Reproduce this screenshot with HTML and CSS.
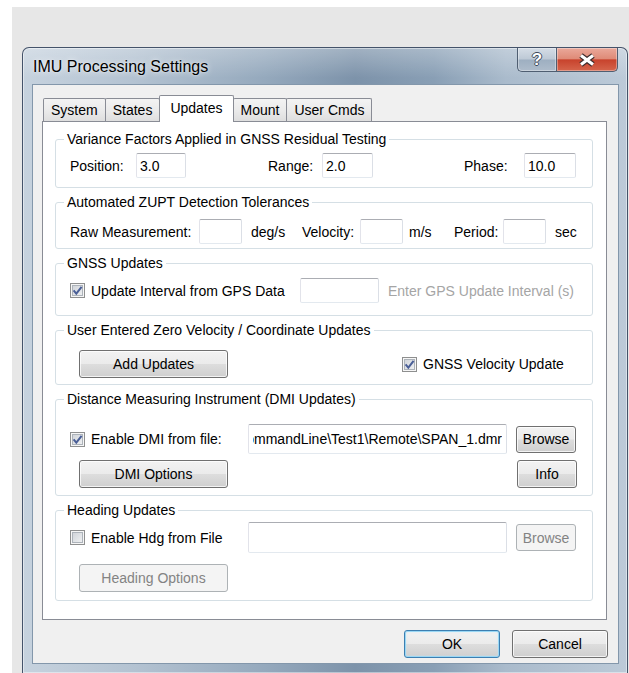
FILE: index.html
```html
<!DOCTYPE html>
<html lang="en">
<head>
<meta charset="utf-8">
<title>IMU Processing Settings</title>
<link rel="stylesheet" href="styles.css">
</head>
<body>
<div class="desk">
  <div class="window">
    <div class="titlebar">
      <span class="title">IMU Processing Settings</span>
      <div class="caption">
        <span class="cap cap-help"><span class="cap-q">?</span></span>
        <span class="cap cap-close">
          <svg class="cap-x" width="20" height="14" viewBox="0 0 20 14">
            <path d="M4 2.5 L16 11.5 M16 2.5 L4 11.5" stroke="#3b2b2b" stroke-width="5.4" fill="none"/>
            <path d="M4 2.5 L16 11.5 M16 2.5 L4 11.5" stroke="#fff" stroke-width="3.2" fill="none"/>
          </svg>
        </span>
      </div>
    </div>

    <div class="client">
      <div class="tabs">
        <span class="tab">System</span>
        <span class="tab">States</span>
        <span class="tab active">Updates</span>
        <span class="tab">Mount</span>
        <span class="tab">User Cmds</span>
      </div>

      <div class="panel">
        <fieldset class="grp grp-variance">
          <legend>Variance Factors Applied in GNSS Residual Testing</legend>
          <div class="row">
            <span class="lbl lbl-position">Position:</span>
            <input class="txt num-position" type="text" value="3.0">
            <span class="lbl lbl-range">Range:</span>
            <input class="txt num-range" type="text" value="2.0">
            <span class="lbl lbl-phase">Phase:</span>
            <input class="txt num-phase" type="text" value="10.0">
          </div>
        </fieldset>

        <fieldset class="grp grp-zupt">
          <legend>Automated ZUPT Detection Tolerances</legend>
          <div class="row">
            <span class="lbl lbl-raw">Raw Measurement:</span>
            <input class="txt tol" type="text">
            <span class="lbl unit-deg">deg/s</span>
            <span class="lbl lbl-velocity">Velocity:</span>
            <input class="txt tol" type="text">
            <span class="lbl unit-ms">m/s</span>
            <span class="lbl lbl-period">Period:</span>
            <input class="txt tol" type="text">
            <span class="lbl unit-sec">sec</span>
          </div>
        </fieldset>

        <fieldset class="grp grp-gnss">
          <legend>GNSS Updates</legend>
          <div class="row">
            <label class="chk chk-gps">
              <span class="box"><svg width="11" height="11" viewBox="0 0 11 11"><path d="M1.6 5.4 L4.3 8.6 L9.6 1.8" stroke="#4a5f97" stroke-width="2" fill="none"/></svg></span>
              Update Interval from GPS Data
            </label>
            <input class="txt interval" type="text">
            <span class="hint">Enter GPS Update Interval (s)</span>
          </div>
        </fieldset>

        <fieldset class="grp grp-user">
          <legend>User Entered Zero Velocity / Coordinate Updates</legend>
          <div class="row">
            <button class="btn btn-wide">Add Updates</button>
            <label class="chk chk-velocity">
              <span class="box"><svg width="11" height="11" viewBox="0 0 11 11"><path d="M1.6 5.4 L4.3 8.6 L9.6 1.8" stroke="#4a5f97" stroke-width="2" fill="none"/></svg></span>
              GNSS Velocity Update
            </label>
          </div>
        </fieldset>

        <fieldset class="grp grp-dmi">
          <legend>Distance Measuring Instrument (DMI Updates)</legend>
          <div class="row">
            <label class="chk chk-file">
              <span class="box"><svg width="11" height="11" viewBox="0 0 11 11"><path d="M1.6 5.4 L4.3 8.6 L9.6 1.8" stroke="#4a5f97" stroke-width="2" fill="none"/></svg></span>
              Enable DMI from file:
            </label>
            <!-- right-to-left box keeps the end of a long path in view -->
            <input class="txt path" type="text" dir="rtl" readonly value="C:\NovAtel\Inertial Explorer\CommandLine\Test1\Remote\SPAN_1.dmr">
            <button class="btn btn-small btn-browse">Browse</button>
          </div>
          <div class="row row-dmi-opts">
            <button class="btn btn-wide">DMI Options</button>
            <button class="btn btn-small btn-info">Info</button>
          </div>
        </fieldset>

        <fieldset class="grp grp-heading">
          <legend>Heading Updates</legend>
          <div class="row">
            <label class="chk chk-file">
              <span class="box"></span>
              Enable Hdg from File
            </label>
            <input class="txt path path-tall" type="text">
            <button class="btn btn-small btn-browse" disabled>Browse</button>
          </div>
          <div class="row row-hdg-opts">
            <button class="btn btn-wide" disabled>Heading Options</button>
          </div>
        </fieldset>
      </div>

      <div class="actions">
        <button class="btn btn-action btn-default">OK</button>
        <button class="btn btn-action">Cancel</button>
      </div>
    </div>
  </div>
</div>
</body>
</html>
```

FILE: styles.css
```css
* { box-sizing: border-box; }

html, body { margin: 0; padding: 0; }

body {
  width: 629px;
  height: 673px;
  overflow: hidden;
  background: #fff;
  font-family: "Liberation Sans", Arial, sans-serif;
  font-size: 14px;
  color: #000;
}

/* grey backdrop behind the dialog */
.desk {
  margin: 7px 0 0 12px;
  height: 666px;
  padding: 40px 0 0 10px;
  background: #e7e7e7;
}

/* Aero style window frame */
.window {
  width: 606px;
  height: 626px;
  display: flex;
  flex-direction: column;
  border: 1px solid #44536a;
  border-bottom: none;
  border-radius: 7px 7px 0 0;
  background:
    linear-gradient(180deg, rgba(255,255,255,.28) 0, rgba(255,255,255,0) 30px),
    linear-gradient(90deg, #c6d2de 0%, #b4c3d2 18%, #95a9bd 40%, #7d93aa 55%, #899fb5 68%, #aabbcc 80%, #bccad8 100%);
  box-shadow: inset 0 0 0 1px rgba(255,255,255,.45);
}

.titlebar {
  flex: none;
  height: 36px;
  display: flex;
  align-items: flex-start;
  padding-left: 10px;
}

.title {
  line-height: 37px;
  font-size: 16px;
  text-shadow: 0 0 6px rgba(255,255,255,.85), 0 0 2px rgba(255,255,255,.6);
}

.caption {
  margin-left: auto;
  margin-right: 9px;
  display: flex;
}

.cap {
  height: 24px;
  display: flex;
  align-items: center;
  justify-content: center;
  border: 1px solid #4f5e71;
  border-top: none;
  box-shadow: inset 0 0 0 1px rgba(255,255,255,.35);
}

.cap-help {
  width: 39px;
  border-right: none;
  border-radius: 0 0 0 5px;
  background: linear-gradient(180deg, #d5dde6 0%, #bdc9d6 48%, #9eafc1 52%, #aebccb 100%);
}

.cap-close {
  width: 62px;
  border-radius: 0 0 5px 0;
  background: linear-gradient(180deg, #eaa89a 0%, #df8b78 46%, #c8432d 52%, #d5654c 100%);
}

.cap-q {
  font-weight: bold;
  font-size: 17px;
  line-height: 1;
  color: #fff;
  text-shadow: 1px 0 0 #3d4a5a, -1px 0 0 #3d4a5a, 0 1px 0 #3d4a5a, 0 -1px 0 #3d4a5a;
}

.cap-x { display: block; }

/* dialog client area */
.client {
  flex: 1;
  margin: 0 8px 9px 9px;
  border: 1px solid #8397ab;
  background: #f0f0f0;
  padding: 10px 11px 0 9px;
  display: flex;
  flex-direction: column;
}

/* tab strip */
.tabs {
  flex: none;
  height: 26px;
  display: flex;
  align-items: flex-end;
  padding-left: 1px;
}

.tab {
  height: 23px;
  padding: 0 7px;
  line-height: 22px;
  white-space: nowrap;
  border: 1px solid #898c95;
  border-bottom: none;
  border-radius: 2px 2px 0 0;
  margin-right: -1px;
  background: linear-gradient(180deg, #f3f3f3 0%, #ebebeb 50%, #dedede 100%);
}

.tab.active {
  height: 27px;
  padding: 0 10px;
  margin-bottom: -1px;
  line-height: 24px;
  background: #fff;
  position: relative;
  z-index: 1;
}

.panel {
  flex: none;
  border: 1px solid #898c95;
  background: #fff;
  padding: 9px 13px 18px 12px;
  display: flex;
  flex-direction: column;
  gap: 6px;
}

/* group boxes */
.grp {
  margin: 0;
  min-width: 0;
  border: 1px solid #d5dfe5;
  border-radius: 3px;
  padding: 0 15px 0 14px;
}

.grp > legend {
  padding: 0 3px;
  margin-left: -6px;
  font-size: 14px;
  line-height: 16px;
}

.grp-variance { padding-top: 6px; padding-bottom: 9px; }
.grp-zupt     { padding-top: 9px; padding-bottom: 4px; }
.grp-gnss     { padding-top: 7px; padding-bottom: 12px; }
.grp-user     { padding-top: 12px; padding-bottom: 6px; }
.grp-dmi      { padding-top: 17px; padding-bottom: 7px; }
.grp-heading  { padding-top: 4px; padding-bottom: 8px; }

.row {
  display: flex;
  align-items: center;
}

.row-dmi-opts { margin-top: 6px; }
.row-hdg-opts { margin-top: 11px; }

.lbl {
  flex: none;
  white-space: nowrap;
  line-height: 16px;
}

/* text boxes */
.txt {
  flex: none;
  margin: 0;
  height: 25px;
  padding: 0 3px;
  font: inherit;
  color: #000;
  background: #fff;
  border: 1px solid;
  border-color: #abadb3 #dbdfe6 #e3e9ef #e2e3ea;
  border-radius: 2px;
  outline: none;
}

.lbl-position { width: 66px; }
.num-position { width: 50px; }
.lbl-range    { width: 54px; margin-left: 82px; }
.num-range    { width: 51px; }
.lbl-phase    { width: 60px; margin-left: 91px; }
.num-phase    { width: 52px; }

.lbl-raw      { width: 129px; }
.tol          { width: 43px; }
.unit-deg     { width: 51px; margin-left: 9px; }
.lbl-velocity { width: 58px; }
.unit-ms      { width: 45px; margin-left: 6px; }
.lbl-period   { width: 49px; }
.unit-sec     { margin-left: 9px; }

.interval { width: 79px; }

.hint {
  margin-left: 9px;
  white-space: nowrap;
  color: #a5a5a5;
}

/* check boxes */
.chk {
  flex: none;
  display: flex;
  align-items: center;
  white-space: nowrap;
  line-height: 16px;
}

.chk-gps      { width: 230px; }
.chk-velocity { margin-left: 174px; }
.chk-file     { width: 178px; }

.box {
  width: 15px;
  height: 15px;
  flex: none;
  margin-right: 6px;
  display: flex;
  align-items: center;
  justify-content: center;
  border: 1px solid #8e8f8f;
  background: linear-gradient(135deg, #cbcfd5 0%, #f4f5f6 100%);
  box-shadow: inset 0 0 0 1px #f6f6f6, inset 0 0 0 2px #adb3ba;
}

.box svg { display: block; }

/* file path boxes */
.path {
  width: 259px;
  height: 30px;
  padding: 0 4px;
}

.path-tall { height: 31px; }

/* push buttons */
.btn {
  flex: none;
  margin: 0;
  height: 28px;
  padding: 0;
  font: inherit;
  color: #000;
  border: 1px solid #707070;
  border-radius: 3px;
  background: linear-gradient(180deg, #f2f2f2 0%, #ebebeb 49%, #dddddd 51%, #cfcfcf 100%);
  box-shadow: inset 0 0 0 1px rgba(255,255,255,.75);
}

.btn:disabled {
  color: #838383;
  border-color: #adb2b5;
  background: #f4f4f4;
  box-shadow: none;
}

.btn-wide   { width: 149px; margin-left: 9px; }
.btn-small  { width: 60px; }
.btn-browse { height: 27px; margin-left: 9px; }
.btn-info   { margin-left: auto; }

.actions {
  display: flex;
  justify-content: flex-end;
  gap: 12px;
  margin-top: 10px;
  margin-right: -1px;
}

.btn-action { width: 96px; }

.btn-default {
  border-color: #3c7fb1;
  box-shadow: inset 0 0 0 1px #9ad7f4, inset 0 0 3px #bfe6fa;
}
```
